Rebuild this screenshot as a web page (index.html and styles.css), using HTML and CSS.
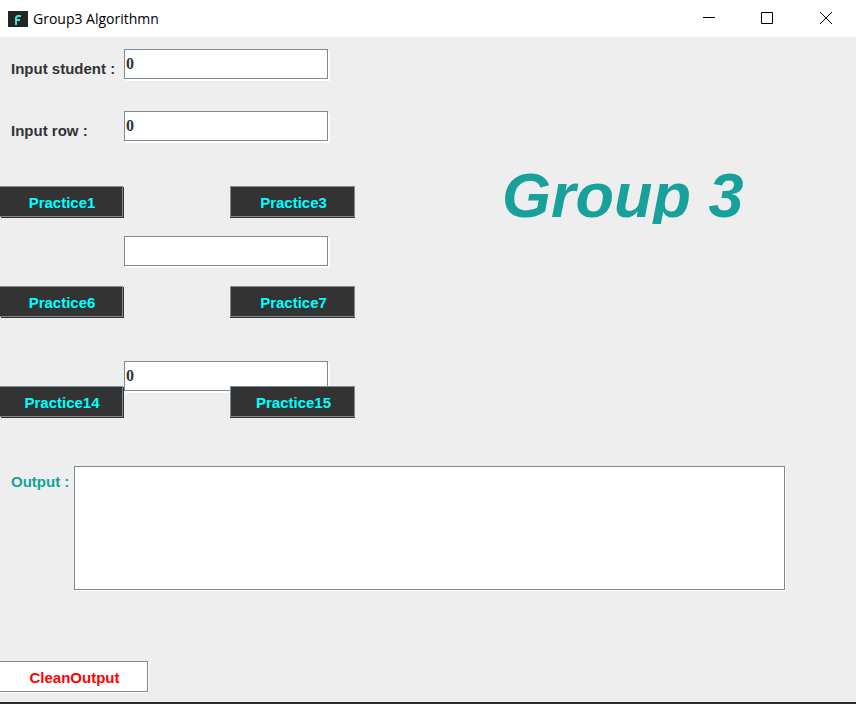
FILE: index.html
```html
<!DOCTYPE html>
<html lang="en">
<head>
<meta charset="utf-8">
<title>Group3 Algorithmn</title>
<link rel="stylesheet" href="styles.css">
</head>
<body>
<header class="titlebar">
  <svg class="app-icon" width="20" height="16" viewBox="0 0 20 16" aria-hidden="true">
    <rect width="20" height="16" fill="#242626"/>
    <path d="M8 14V6.5L9.5 5H13" fill="none" stroke="#3fe6e0" stroke-width="2"/>
    <path d="M9 9H12" stroke="#3fe6e0" stroke-width="2"/>
  </svg>
  <span class="window-title">Group3 Algorithmn</span>
  <div class="window-controls">
    <button type="button" aria-label="Minimize"><svg width="12" height="12" viewBox="0 0 12 12"><path d="M0 5.5H12" stroke="#000"/></svg></button>
    <button type="button" aria-label="Maximize"><svg width="12" height="12" viewBox="0 0 12 12"><path d="M.5 .5H11.5V11.5H.5Z" fill="none" stroke="#000"/></svg></button>
    <button type="button" aria-label="Close"><svg width="12" height="12" viewBox="0 0 12 12"><path d="M0 0L12 12M12 0L0 12" stroke="#000"/></svg></button>
  </div>
</header>
<main>
  <div class="top">
    <form class="controls">
      <div class="row">
        <label for="student">Input student :</label>
        <input class="field" id="student" type="text" value="0">
      </div>
      <div class="row second">
        <label for="row">Input row :</label>
        <input class="field" id="row" type="text" value="0">
      </div>
      <div class="row actions first">
        <button class="dark edge" type="button">Practice1</button>
        <button class="dark" type="button">Practice3</button>
      </div>
      <div class="row middle">
        <input class="field" type="text" aria-label="Practice value">
      </div>
      <div class="row actions">
        <button class="dark edge" type="button">Practice6</button>
        <button class="dark" type="button">Practice7</button>
      </div>
      <div class="row last">
        <input class="field" type="text" value="0" aria-label="Practice number">
      </div>
      <div class="row actions overlap">
        <button class="dark edge" type="button">Practice14</button>
        <button class="dark" type="button">Practice15</button>
      </div>
    </form>
    <h1>Group 3</h1>
  </div>
  <div class="output">
    <label for="output">Output :</label>
    <textarea id="output"></textarea>
  </div>
  <button class="clean edge" type="button">CleanOutput</button>
</main>
</body>
</html>
```

FILE: styles.css
```css
* {
  box-sizing: border-box;
}

body {
  margin: 0;
  min-height: 100vh;
  display: flex;
  flex-direction: column;
  background: #eee;
  border-bottom: 2px solid #2b2b2b;
  color: #333;
  font: bold 15px/18px "Liberation Sans", Arial, sans-serif;
}

button,
input,
textarea {
  margin: 0;
  border-radius: 0;
  font: inherit;
}

.titlebar {
  display: flex;
  align-items: center;
  height: 37px;
  padding-left: 8px;
  background: #fff;
}

.window-title {
  margin-left: 5px;
  color: #000;
  font: 14px/20px "Open Sans", "Noto Sans", sans-serif;
}

.window-controls {
  display: flex;
  align-self: stretch;
  margin-left: auto;
}

.window-controls button {
  display: flex;
  align-items: center;
  justify-content: center;
  width: 58px;
  padding: 0 0 1px;
  border: 0;
  background: none;
}

.window-controls button:last-child {
  width: 60px;
}

main {
  padding-top: 12px;
}

.top {
  display: flex;
  align-items: flex-start;
}

.controls {
  flex: none;
}

.row {
  display: grid;
  grid-template-columns: 124px 106px 125px;
}

.row label {
  padding: 11px 0 0 11px;
}

.field {
  grid-column: 2 / 4;
  width: 204px;
  height: 30px;
  padding: 0 1px;
  border: 1px solid #7a8a99;
  background: #fff;
  box-shadow: 2px 2px 0 #fff;
  color: #333;
  font: bold 16px/20px "Liberation Serif", "Times New Roman", serif;
}

.second {
  margin-top: 32px;
}

.first {
  margin-top: 45px;
}

.middle {
  margin: 18px 0 20px;
}

.last {
  margin-top: 43px;
}

.overlap {
  position: relative;
  margin-top: -5px;
}

.dark {
  grid-column: 3;
  height: 31px;
  margin-bottom: 1px;
  padding: 2px 0 0 2px;
  border: 1px solid #7a8a99;
  background: #333;
  box-shadow: 0 1px 0 #333;
  color: #0ff;
}

.edge {
  border-left: 0;
}

.dark.edge {
  grid-column: 1;
  margin-right: 1px;
  box-shadow: 1px 1px 0 #333;
}

h1 {
  margin: 117px 0 0 147px;
  overflow: hidden;
  color: #17a19a;
  font-size: 63px;
  font-style: italic;
  line-height: 58px;
}

.output {
  display: flex;
  align-items: flex-start;
  margin: 48px 71px 0 0;
}

.output label {
  flex: none;
  width: 74px;
  padding: 7px 0 0 11px;
  color: #17a19a;
}

textarea {
  flex: 1;
  height: 124px;
  padding: 2px;
  border: 1px solid #7a8a99;
  background: #fff;
  box-shadow: 1px 1px 0 #fff;
  resize: none;
}

.clean {
  display: block;
  width: 148px;
  height: 31px;
  margin-top: 71px;
  padding: 2px 0 0 2px;
  border: 1px solid #7a8a99;
  border-left: 0;
  background: #fff;
  box-shadow: 1px 1px 0 #fff;
  color: #f00;
}
```
